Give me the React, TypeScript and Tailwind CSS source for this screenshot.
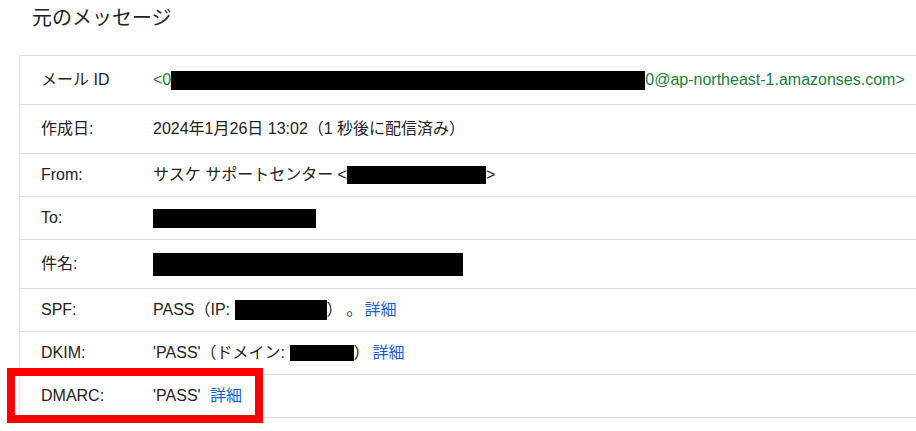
const Bar = ({ w, h }: { w: number; h: number }) => (
  <span className="inline-block bg-black align-middle" style={{ width: w, height: h }} />
);

const Link = ({ className = "" }: { className?: string }) => (
  <a className={`text-[#1a5cd8] ${className}`}>詳細</a>
);

interface Row {
  label: string;
  h: string;
  value: React.ReactNode;
}

const rows: Row[] = [
  {
    label: "メール ID",
    h: "h-[49px]",
    value: (
      <span className="flex items-center text-[#188038]">
        &lt;0
        <Bar w={474} h={19} />
        0@ap-northeast-1.amazonses.com&gt;
      </span>
    ),
  },
  {
    label: "作成日:",
    h: "h-[49px]",
    value: <span>2024年1月26日 13:02（1 秒後に配信済み）</span>,
  },
  {
    label: "From:",
    h: "h-[43px]",
    value: (
      <span className="flex items-center">
        サスケ サポートセンター &lt;
        <Bar w={139} h={18} />
        &gt;
      </span>
    ),
  },
  {
    label: "To:",
    h: "h-[43px]",
    value: (
      <span className="flex items-center">
        <Bar w={163} h={19} />
      </span>
    ),
  },
  {
    label: "件名:",
    h: "h-[49px]",
    value: (
      <span className="flex items-center">
        <Bar w={310} h={23} />
      </span>
    ),
  },
  {
    label: "SPF:",
    h: "h-[43px]",
    value: (
      <span className="flex items-center whitespace-pre">
        PASS（IP:{" "}
        <Bar w={92} h={20} />
        ）<span className="ml-[4px]">。</span>
        <Link className="ml-[2px]" />
      </span>
    ),
  },
  {
    label: "DKIM:",
    h: "h-[43px]",
    value: (
      <span className="flex items-center whitespace-pre">
        'PASS'（ドメイン:{" "}
        <Bar w={64} h={16} />
        ）<Link className="ml-[3px]" />
      </span>
    ),
  },
  {
    label: "DMARC:",
    h: "h-[43px]",
    value: (
      <span className="flex items-center whitespace-pre">
        'PASS' <Link className="ml-[5px]" />
      </span>
    ),
  },
];

export default function App() {
  return (
    <div
      className="relative w-[916px] h-[431px] overflow-hidden bg-white text-[#222222]"
      style={{ fontFamily: '"Liberation Sans", Arial, "Noto Sans CJK JP", sans-serif' }}
    >
      <div className="h-[55px] pl-[32px] pt-[4px]">
        <h1 className="text-[20px] leading-[28px]">元のメッセージ</h1>
      </div>
      <div className="ml-[19px] w-[1000px] border-l border-t border-[#e0e0e0]">
        {rows.map((row) => (
          <div
            key={row.label}
            className={`flex items-center border-b border-[#e0e0e0] text-[16px] ${row.h}`}
          >
            <div className="w-[133px] shrink-0 pl-[21px]">{row.label}</div>
            <div>{row.value}</div>
          </div>
        ))}
      </div>
      <div className="absolute left-[7px] top-[368px] w-[256px] h-[55px] border-[8px] border-[#ff0000]" />
    </div>
  );
}
